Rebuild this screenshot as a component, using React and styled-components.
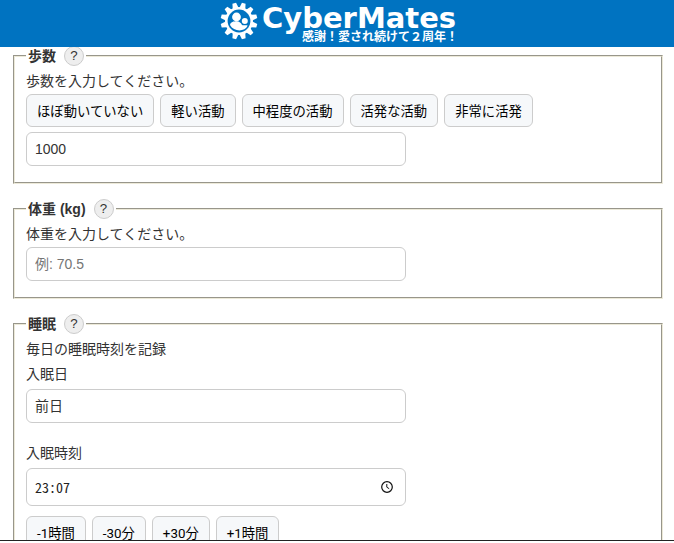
import React, { useState } from "react";
import styled, { createGlobalStyle } from "styled-components";

const GlobalStyle = createGlobalStyle`
  * {
    box-sizing: border-box;
  }
  body {
    margin: 0;
    background: #ffffff;
    color: #333333;
    font-family: "Liberation Sans", "Noto Sans CJK JP", sans-serif;
    font-size: 14px;
    line-height: 24px;
  }
`;
const Page = styled.div`
  height: 100vh;
  padding-bottom: 2px;
`;
const Scroller = styled.div`
  height: 100%;
  overflow: hidden;
  border-bottom: 1px solid #222222;
`;
const Header = styled.header`
  position: fixed;
  top: 0;
  left: 0;
  right: 0;
  z-index: 1;
  display: flex;
  justify-content: center;
  height: 47px;
  padding: 2px 0 0 4px;
  background: #0073c1;
  color: #ffffff;
`;
const Brand = styled.a`
  display: flex;
  gap: 4px;
  color: inherit;
  text-decoration: none;
`;
const BrandText = styled.span`
  display: flex;
  flex-direction: column;
  padding-top: 4px;
`;
const BrandName = styled.span`
  font-family: "DejaVu Sans", sans-serif;
  font-size: 29px;
  font-weight: bold;
  line-height: 24px;
`;
const BrandCopy = styled.span`
  padding-left: 40px;
  font-family: "Noto Sans CJK JP", sans-serif;
  font-size: 12px;
  font-weight: bold;
  line-height: 12px;
`;
const Form = styled.form`
  display: flex;
  flex-direction: column;
  gap: 15px;
  padding: 46px 11px 40px 13px;
`;
const Group = styled.fieldset`
  min-width: 0;
  margin: 0;
  padding: 3px 11px 16px;
  border: 2px groove #ece9d8;
`;
const Legend = styled.legend`
  display: flex;
  align-items: center;
  gap: 8px;
  height: 20px;
  padding: 0 2px;
  font-weight: bold;
`;
const Help = styled.button`
  width: 20px;
  height: 20px;
  padding: 0;
  border: 1px solid #cccccc;
  border-radius: 50%;
  background: #eeeeee;
  color: #333333;
  font-family: "Liberation Sans", sans-serif;
  line-height: 18px;
`;
const Text = styled.p`
  margin: 0 0 1px;
`;
const Label = styled.label`
  display: block;
  margin-bottom: ${(props) => (props.$tight ? 1 : 3)}px;
`;
const Field = styled.div`
  margin-bottom: ${(props) => props.$space}px;
`;
const Input = styled.input`
  display: block;
  width: 100%;
  max-width: 380px;
  height: 34px;
  padding: 0 8px;
  border: 1px solid #cccccc;
  border-radius: 6px;
  background: #ffffff;
  color: #333333;
  font-family: "Liberation Sans", "Noto Sans CJK JP", sans-serif;
  font-size: 14px;
  &::placeholder {
    color: #757575;
  }
`;
const Select = styled(Input).attrs({ as: "select" })`
  appearance: none;
`;
const TimeBox = styled.div`
  display: flex;
  align-items: center;
  max-width: 380px;
  height: 38px;
  padding: 0 12px 0 8px;
  border: 1px solid #cccccc;
  border-radius: 6px;
`;
const TimeInput = styled.input`
  flex: 1;
  min-width: 0;
  padding: 0;
  border: 0;
  background: transparent;
  color: #222222;
  font-family: "Noto Sans Mono CJK JP", "Noto Sans CJK JP", monospace;
  font-size: 14px;
`;
const ClockButton = styled.button`
  display: flex;
  padding: 0;
  border: 0;
  background: transparent;
  color: #111111;
`;
const Buttons = styled.div`
  display: flex;
  flex-wrap: wrap;
  gap: 6px;
  margin-bottom: 5px;
`;
const Button = styled.button`
  height: 33px;
  padding: 0 10px;
  border: 1px solid #cccccc;
  border-radius: 6px;
  background: #f6f8fa;
  color: #000000;
  font-family: Roboto, "Noto Sans CJK JP", sans-serif;
`;

const teeth = Array.from({ length: 12 }, (_, i) => i * 30 + 15);

function GearLogo() {
  return (
    <svg width="38" height="38" viewBox="-19 -19 38 38" aria-hidden="true">
      <g fill="#ffffff">
        {teeth.map((angle) => (
          <path
            key={angle}
            d="M-3 -13 L-1.9 -18.4 H1.9 L3 -13 Z"
            transform={`rotate(${angle})`}
          />
        ))}
        <circle r="14" />
      </g>
      <circle r="11.4" fill="#0073c1" />
      <g fill="#ffffff">
        <circle cx="-2.5" cy="-4" r="4.4" />
        <path d="M-9 4 C-8.6 0.8 -5 0.2 -2.5 0.2 C0.5 0.2 2 2 3 4 C4.5 5 8 3.4 8.6 4.8 C6 10.8 -5 11.4 -9 4 Z" />
        <circle cx="5.8" cy="0" r="3" />
      </g>
    </svg>
  );
}

function ClockIcon() {
  return (
    <svg
      width="12"
      height="12"
      viewBox="0 0 12 12"
      fill="none"
      stroke="currentColor"
      aria-hidden="true"
    >
      <circle cx="6" cy="6" r="5.3" strokeWidth="1.2" />
      <path d="M5.8 3 V6.2 L8.2 7.7" strokeWidth="1" />
    </svg>
  );
}

function GroupTitle({ children }) {
  return (
    <Legend>
      {children}
      <Help type="button" aria-label={`${children}のヘルプ`}>
        ?
      </Help>
    </Legend>
  );
}

const activities = [
  { label: "ほぼ動いていない", steps: "1000" },
  { label: "軽い活動", steps: "3000" },
  { label: "中程度の活動", steps: "6000" },
  { label: "活発な活動", steps: "9000" },
  { label: "非常に活発", steps: "12000" },
];
const shifts = [
  { label: "-1時間", minutes: -60 },
  { label: "-30分", minutes: -30 },
  { label: "+30分", minutes: 30 },
  { label: "+1時間", minutes: 60 },
];

function shiftTime(time, minutes) {
  const [h = 0, m = 0] = time.split(":").map((part) => Number(part) || 0);
  const total = (h * 60 + m + minutes + 1440) % 1440;
  return [Math.floor(total / 60), total % 60]
    .map((n) => String(n).padStart(2, "0"))
    .join(":");
}

function currentTime() {
  const now = new Date();
  return shiftTime("00:00", now.getHours() * 60 + now.getMinutes());
}

export default function App() {
  const [steps, setSteps] = useState("1000");
  const [time, setTime] = useState("23:07");
  return (
    <Page>
      <GlobalStyle />
      <Header>
        <Brand href="#">
          <GearLogo />
          <BrandText>
            <BrandName>CyberMates</BrandName>
            <BrandCopy>感謝！愛され続けて２周年！</BrandCopy>
          </BrandText>
        </Brand>
      </Header>
      <Scroller>
        <Form>
          <Group>
            <GroupTitle>歩数</GroupTitle>
            <Label $tight htmlFor="steps">
              歩数を入力してください。
            </Label>
            <Buttons>
              {activities.map((item) => (
                <Button key={item.label} type="button" onClick={() => setSteps(item.steps)}>
                  {item.label}
                </Button>
              ))}
            </Buttons>
            <Input id="steps" value={steps} onChange={(e) => setSteps(e.target.value)} />
          </Group>
          <Group>
            <GroupTitle>体重 (kg)</GroupTitle>
            <Label $tight htmlFor="weight">
              体重を入力してください。
            </Label>
            <Input id="weight" placeholder="例: 70.5" />
          </Group>
          <Group>
            <GroupTitle>睡眠</GroupTitle>
            <Text>毎日の睡眠時刻を記録</Text>
            <Field $space={18}>
              <Label htmlFor="sleep-day">入眠日</Label>
              <Select id="sleep-day">
                <option>前日</option>
                <option>当日</option>
              </Select>
            </Field>
            <Field $space={10}>
              <Label htmlFor="sleep-time">入眠時刻</Label>
              <TimeBox>
                <TimeInput
                  id="sleep-time"
                  inputMode="numeric"
                  value={time}
                  onChange={(e) => setTime(e.target.value)}
                />
                <ClockButton
                  type="button"
                  aria-label="現在時刻"
                  onClick={() => setTime(currentTime())}
                >
                  <ClockIcon />
                </ClockButton>
              </TimeBox>
            </Field>
            <Buttons>
              {shifts.map((item) => (
                <Button
                  key={item.label}
                  type="button"
                  onClick={() => setTime(shiftTime(time, item.minutes))}
                >
                  {item.label}
                </Button>
              ))}
            </Buttons>
          </Group>
        </Form>
      </Scroller>
    </Page>
  );
}
